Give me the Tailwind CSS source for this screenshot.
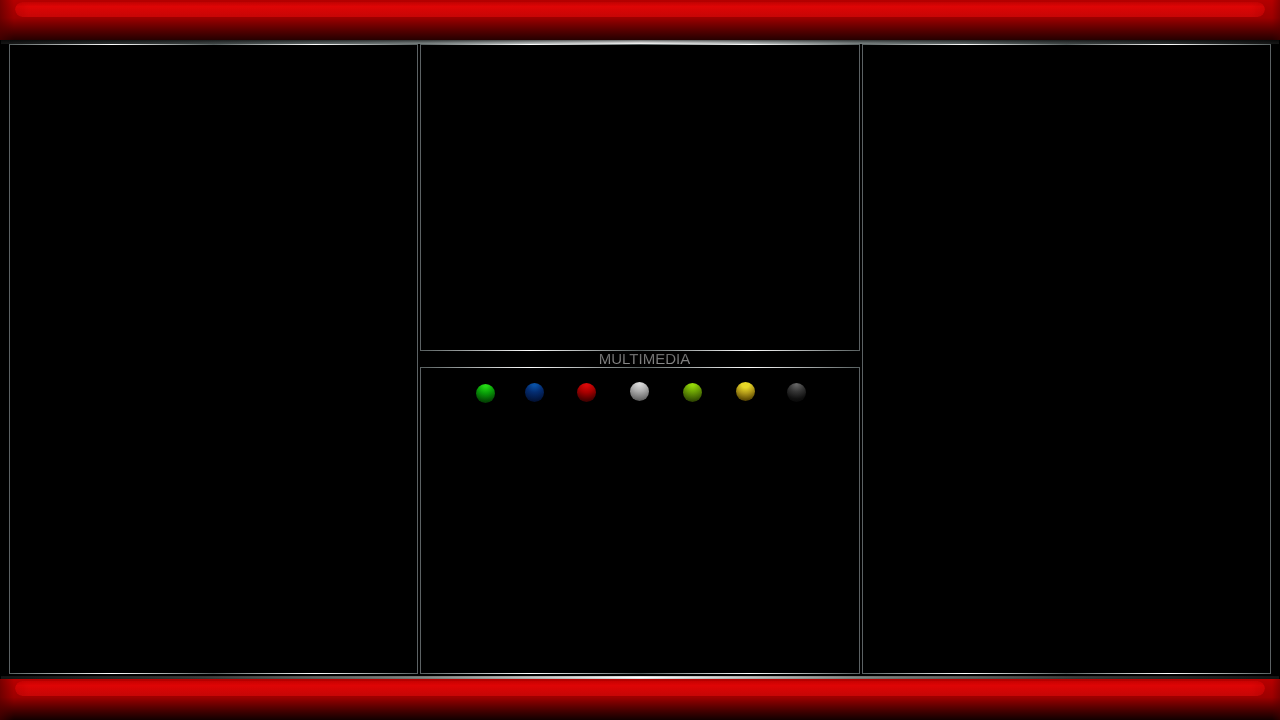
<!DOCTYPE html>
<html lang="en">
<head>
<meta charset="utf-8">
<title>Multimedia</title>
<script src="https://cdn.jsdelivr.net/npm/@tailwindcss/browser@4"></script>
</head>
<body class="bg-black h-screen flex flex-col font-['Liberation_Sans',Arial,sans-serif]">
<header class="h-10 shrink-0 relative bg-linear-to-b from-[#b40000] from-0% via-[#9c0000] via-45% to-[#260000]">
  <div class="absolute inset-0 bg-[linear-gradient(to_right,#50000099,transparent_14px,transparent_calc(100%-8px),#50000066)]"></div>
  <div class="absolute inset-x-[15px] top-[2px] h-[15px] rounded-[8px] bg-[linear-gradient(to_bottom,#c00202,#de0505_30%,#c60606)] mask-[linear-gradient(to_right,#000a,#000_14px,#000_calc(100%-14px),#000a)]"></div>
</header>
<div class="h-1 shrink-0 mx-px bg-[linear-gradient(to_bottom,#00000099,#00000033_60%,transparent),linear-gradient(to_right,#151515,#424848_18%,#7c8484_33%,#ffffff_50%,#7c8484_67%,#424848_82%,#151515)]"></div>
<main class="grow grid grid-cols-[409fr_440fr_409fr] gap-x-[2px] px-[9px] pb-[2px]">
  <section class="border-x border-[#5c6264] flex flex-col justify-between">
    <div class="h-px bg-[linear-gradient(to_right,#586060,#ffffff_25%,#586060_50%,#ffffff_75%,#586060)]"></div>
    <div class="h-px bg-[linear-gradient(to_right,#586060,#ffffff_25%,#586060_50%,#ffffff_75%,#586060)]"></div>
  </section>
  <div class="grid grid-rows-[307fr_16px_307fr]">
    <section class="border-x border-[#5c6264] flex flex-col justify-between">
      <div class="h-px bg-[linear-gradient(to_right,#586060,#ffffff_25%,#586060_50%,#ffffff_75%,#586060)]"></div>
      <div class="h-px bg-[linear-gradient(to_right,#586060,#ffffff_25%,#586060_50%,#ffffff_75%,#586060)]"></div>
    </section>
    <h1 class="pl-[9px] text-center text-[15px] leading-4"><span class="bg-linear-to-b from-[#5c5c5c] to-[#949494] bg-clip-text text-transparent">MULTIMEDIA</span></h1>
    <section class="border-x border-[#5c6264] flex flex-col">
      <div class="h-px bg-[linear-gradient(to_right,#586060,#ffffff_25%,#586060_50%,#ffffff_75%,#586060)]"></div>
      <nav aria-label="Multimedia" class="mt-[14px] h-[21px] pl-px self-center grid grid-cols-[49px_52px_53px_53px_53px_51px_19px] items-center">
        <button aria-label="Green" class="size-[19px] rounded-full self-end bg-[radial-gradient(circle_19px_at_50%_5%,#24d814_10%,#089c08_45%,#045404_80%,#023002)]"></button>
        <button aria-label="Blue" class="size-[19px] rounded-full bg-[radial-gradient(circle_19px_at_50%_5%,#0850a4_10%,#042c70_45%,#021844_80%,#010c28)]"></button>
        <button aria-label="Red" class="size-[19px] rounded-full bg-[radial-gradient(circle_19px_at_50%_5%,#d80808_10%,#a80000_45%,#580000_80%,#300000)]"></button>
        <button aria-label="White" class="size-[19px] rounded-full self-start bg-[radial-gradient(circle_19px_at_50%_5%,#d8d8d8_10%,#acacac_45%,#747474_80%,#4c4c4c)]"></button>
        <button aria-label="Lime" class="size-[19px] rounded-full bg-[radial-gradient(circle_19px_at_50%_5%,#94d808_10%,#689c04_45%,#3c5c02_80%,#243401)]"></button>
        <button aria-label="Yellow" class="size-[19px] rounded-full self-start bg-[radial-gradient(circle_19px_at_50%_10%,#e8d828_20%,#b09818_50%,#685404_80%,#403000)]"></button>
        <button aria-label="Black" class="size-[19px] rounded-full bg-[radial-gradient(circle_19px_at_50%_5%,#646464_5%,#343434_42%,#101010_78%,#060606)]"></button>
      </nav>
      <div class="mt-auto h-px bg-[linear-gradient(to_right,#586060,#ffffff_25%,#586060_50%,#ffffff_75%,#586060)]"></div>
    </section>
  </div>
  <section class="border-x border-[#5c6264] flex flex-col justify-between">
    <div class="h-px bg-[linear-gradient(to_right,#586060,#ffffff_25%,#586060_50%,#ffffff_75%,#586060)]"></div>
    <div class="h-px bg-[linear-gradient(to_right,#586060,#ffffff_25%,#586060_50%,#ffffff_75%,#586060)]"></div>
  </section>
</main>
<div class="h-[3px] shrink-0 mx-px bg-[linear-gradient(to_bottom,#00000033,transparent,#00000033),linear-gradient(to_right,#151515,#3c3e3c_16%,#848884_33%,#ffffff_50%,#848884_67%,#3c3e3c_84%,#151515)]"></div>
<footer class="h-[41px] shrink-0 relative bg-linear-to-b from-[#b80000] from-0% via-[#9c0000] via-45% to-[#120000]">
  <div class="absolute inset-0 bg-[linear-gradient(to_right,#50000099,transparent_14px,transparent_calc(100%-8px),#50000066)]"></div>
  <div class="absolute inset-x-[15px] top-[2px] h-[15px] rounded-[8px] bg-[linear-gradient(to_bottom,#c80202,#de0505_30%,#c60606)] mask-[linear-gradient(to_right,#000a,#000_14px,#000_calc(100%-14px),#000a)]"></div>
</footer>
</body>
</html>
